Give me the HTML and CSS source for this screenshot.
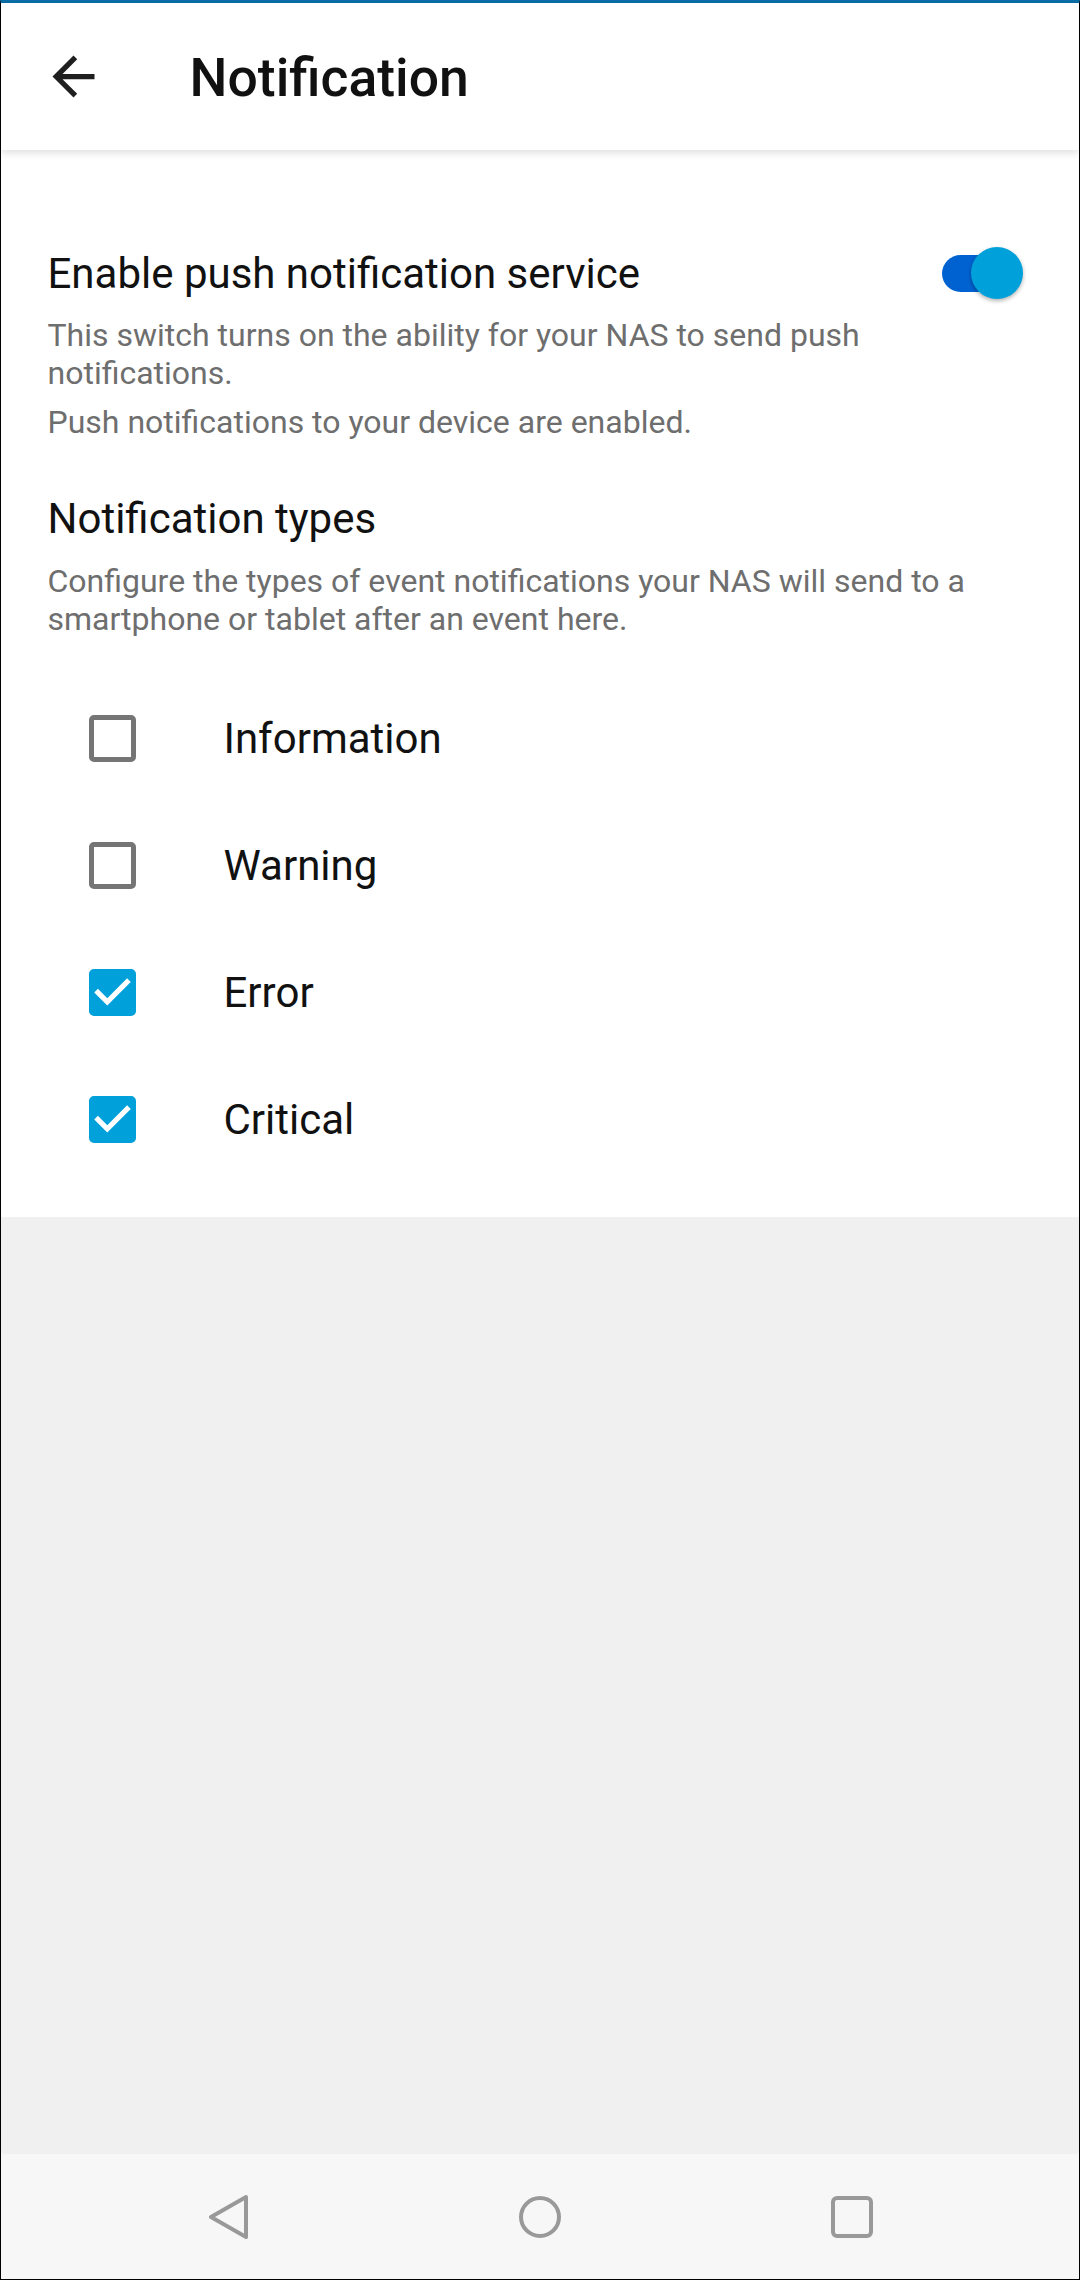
FILE: index.html
```html
<!DOCTYPE html>
<html lang="en">
<head>
<meta charset="utf-8">
<title>Notification</title>
<link rel="stylesheet" href="styles.css">
</head>
<body>
<div class="screen">
  <header class="toolbar">
    <svg class="back" viewBox="0 0 24 24" aria-hidden="true"><path d="M20 11H7.83l5.59-5.59L12 4l-8 8 8 8 1.41-1.41L7.83 13H20v-2z"/></svg>
    <h1 class="title">Notification</h1>
  </header>
  <main class="content">
    <section class="setting">
      <div class="setting-head">
        <h2 class="setting-title">Enable push notification service</h2>
        <div class="switch on"><span class="track"></span><span class="thumb"></span></div>
      </div>
      <p class="desc">This switch turns on the ability for your NAS to send push notifications.</p>
      <p class="desc status">Push notifications to your device are enabled.</p>
    </section>
    <section class="setting types">
      <h2 class="setting-title">Notification types</h2>
      <p class="desc">Configure the types of event notifications your NAS will send to a smartphone or tablet after an event here.</p>
    </section>
    <ul class="checklist">
      <li class="check-row"><span class="box"></span><span class="label">Information</span></li>
      <li class="check-row"><span class="box"></span><span class="label">Warning</span></li>
      <li class="check-row"><span class="box checked"><svg viewBox="3 3 18 18"><path d="M10 17l-5-5 1.41-1.41L10 14.17l7.59-7.59L19 8l-9 9z"/></svg></span><span class="label">Error</span></li>
      <li class="check-row"><span class="box checked"><svg viewBox="3 3 18 18"><path d="M10 17l-5-5 1.41-1.41L10 14.17l7.59-7.59L19 8l-9 9z"/></svg></span><span class="label">Critical</span></li>
    </ul>
  </main>
  <div class="filler"></div>
  <nav class="navbar">
    <span class="nav-btn"><svg viewBox="0 0 40 44"><path d="M38 2 L3 22 L38 42 Z"/></svg></span>
    <span class="nav-btn"><svg viewBox="0 0 44 44"><circle cx="22" cy="22" r="19"/></svg></span>
    <span class="nav-btn"><svg viewBox="0 0 44 44"><rect x="3" y="3" width="38" height="38" rx="4"/></svg></span>
  </nav>
</div>
</body>
</html>
```
FILE: styles.css
```css
* { box-sizing: border-box; }
html, body { margin: 0; padding: 0; }
body {
  width: 1080px;
  height: 2280px;
  font-family: Roboto, "Noto Sans", "Liberation Sans", sans-serif;
  background: #fff;
}
.screen {
  width: 1080px;
  height: 2280px;
  border-top: 3px solid #0a6ea8;
  border-left: 1px solid #000;
  border-right: 1px solid #000;
  border-bottom: 1px solid #000;
  display: flex;
  flex-direction: column;
  background: #fff;
}
.toolbar {
  height: 147px;
  flex: none;
  display: flex;
  align-items: center;
  padding-left: 40.5px;
  background: #fff;
  box-shadow: 0 3px 8px rgba(0,0,0,0.13);
  position: relative;
  z-index: 1;
}
.back {
  width: 63px;
  height: 63px;
  fill: #1f1f1f;
  flex: none;
}
.title {
  margin: 2px 0 0 85px;
  font-size: 53.5px;
  font-weight: 500;
  color: #111;
  line-height: 1;
}
.content {
  background: #fff;
  padding: 96px 56px 34px 46.5px;
  flex: none;
}
.setting-head {
  display: flex;
  align-items: center;
  justify-content: space-between;
}
.setting-title {
  margin: 0;
  font-size: 42px;
  font-weight: 400;
  line-height: 56px;
  color: #111;
}
.desc {
  margin: 14px 0 0;
  font-size: 32px;
  line-height: 38px;
  color: #6e6e6e;
}
.desc.status { margin-top: 11px; }
.types { margin-top: 50px; }
.types .desc { margin-top: 15px; }
.switch {
  position: relative;
  width: 81px;
  height: 56px;
  flex: none;
  margin-top: -2px;
}
.track {
  position: absolute;
  left: 0;
  top: 10px;
  width: 70px;
  height: 37px;
  border-radius: 18.5px;
  background: #0062d1;
}
.thumb {
  position: absolute;
  right: 0;
  top: 2px;
  width: 52px;
  height: 52px;
  border-radius: 50%;
  background: #00a0db;
  box-shadow: 0 2px 4px rgba(0,0,0,0.3);
}
.checklist {
  list-style: none;
  margin: 37px 0 0;
  padding: 0;
}
.check-row {
  height: 127px;
  display: flex;
  align-items: center;
  padding-left: 41.5px;
}
.box {
  width: 47px;
  height: 47px;
  border: 5px solid #757575;
  border-radius: 5px;
  flex: none;
  display: flex;
  align-items: center;
  justify-content: center;
}
.box.checked {
  background: #00a0db;
  border-color: #00a0db;
}
.box svg {
  width: 47px;
  height: 47px;
  fill: #fff;
  flex: none;
}
.label {
  margin-left: 87.5px;
  font-size: 42px;
  line-height: 56px;
  color: #111;
}
.filler {
  flex: 1;
  background: #f0f0f0;
}
.navbar {
  height: 125px;
  flex: none;
  background: #f7f7f7;
  display: flex;
  align-items: center;
  justify-content: center;
  gap: 192px;
}
.nav-btn {
  width: 120px;
  height: 60px;
  display: flex;
  align-items: center;
  justify-content: center;
}
.nav-btn svg {
  width: 44px;
  height: 44px;
  fill: none;
  stroke: #999;
  stroke-width: 4;
  stroke-linejoin: round;
}
.nav-btn:first-child svg { width: 40px; height: 44px; }
```
